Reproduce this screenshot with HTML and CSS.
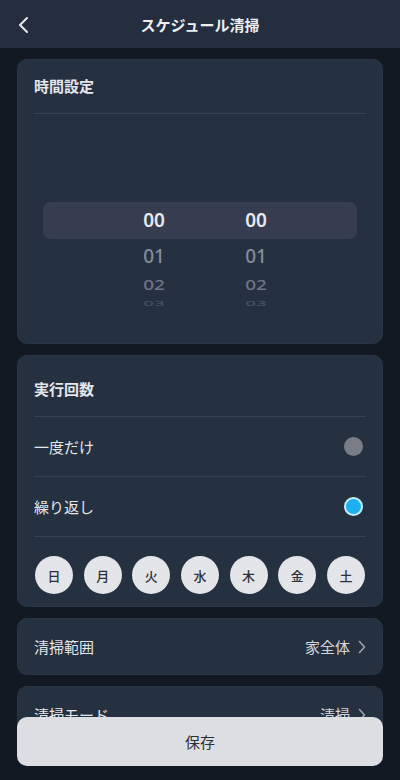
FILE: index.html
```html
<!DOCTYPE html>
<html lang="ja">
<head>
  <meta charset="UTF-8">
  <title>スケジュール清掃</title>
  <meta name="viewport" content="width=device-width, initial-scale=1">
  <link rel="stylesheet" href="styles.css">
</head>
<body>
  <div class="header">
    <svg class="back" width="12" height="18" viewBox="0 0 12 18"><path d="M9 2 L2 9 L9 16" fill="none" stroke="#e8eaee" stroke-width="2" stroke-linecap="round" stroke-linejoin="round"/></svg>
    <h1>スケジュール清掃</h1>
  </div>

  <div class="page">
    <div class="card">
      <div class="card-title time-title">時間設定</div>
      <div class="picker">
        <div class="picker-hl"></div>
        <div class="wheel">
          <div class="cell sel">00</div>
          <div class="cell n1">01</div>
          <div class="cell n2">02</div>
          <div class="cell n3">03</div>
        </div>
        <div class="wheel">
          <div class="cell sel">00</div>
          <div class="cell n1">01</div>
          <div class="cell n2">02</div>
          <div class="cell n3">03</div>
        </div>
      </div>
    </div>

    <div class="card">
      <div class="card-title repeat-title">実行回数</div>
      <div class="row">
        <span>一度だけ</span>
        <span class="radio"></span>
      </div>
      <div class="row">
        <span>繰り返し</span>
        <span class="radio on"></span>
      </div>
      <div class="days">
        <span class="day">日</span>
        <span class="day">月</span>
        <span class="day">火</span>
        <span class="day">水</span>
        <span class="day">木</span>
        <span class="day">金</span>
        <span class="day">土</span>
      </div>
    </div>

    <div class="card link">
      <span>清掃範囲</span>
      <span class="value">家全体 <svg width="8" height="14" viewBox="0 0 8 14"><path d="M1.5 1.5 L6.5 7 L1.5 12.5" fill="none" stroke="#9ca1ab" stroke-width="1.6" stroke-linecap="round" stroke-linejoin="round"/></svg></span>
    </div>

    <div class="card link">
      <span>清掃モード</span>
      <span class="value">清掃 <svg width="8" height="14" viewBox="0 0 8 14"><path d="M1.5 1.5 L6.5 7 L1.5 12.5" fill="none" stroke="#9ca1ab" stroke-width="1.6" stroke-linecap="round" stroke-linejoin="round"/></svg></span>
    </div>
  </div>

  <button class="save">保存</button>
</body>
</html>
```

FILE: styles.css
```css
body { margin: 0; background: #131923; color: #e4e6ea; font-family: "Noto Sans CJK JP", "Noto Sans", sans-serif; height: 780px; overflow: hidden; }
.header { height: 48px; background: #252e3e; display: flex; align-items: center; justify-content: center; position: relative; }
.header .back { position: absolute; left: 18px; top: 16px; }
.header h1 { margin: 0; font-size: 15px; font-weight: 700; color: #eceef1; }

.page { padding: 11px 17px 0; display: flex; flex-direction: column; gap: 11px; }
.card { background: #253041; border: 1px solid #2b3545; border-radius: 10px; padding: 0 16px; }

.card-title { font-size: 15px; font-weight: 700; border-bottom: 1px solid #374151; }
.time-title { height: 53px; line-height: 52px; }
.repeat-title { height: 60px; line-height: 66px; }

.picker { position: relative; height: 229px; display: flex; padding-left: 69px; }
.picker-hl { position: absolute; left: 9px; right: 9px; top: 88px; height: 37px; background: #373d50; border-radius: 7px; }
.wheel { position: relative; width: 102px; padding-top: 88px; display: flex; flex-direction: column; align-items: center; font-family: "Noto Sans", sans-serif; }
.cell { font-size: 19px; line-height: 37px; height: 37px; font-weight: 500; }
.cell.sel { color: #e6e8ec; font-weight: 600; }
.cell.n1 { color: #868c98; height: 35px; line-height: 35px; }
.cell.n2 { color: #6e7584; height: 22px; line-height: 22px; transform: scaleY(0.75); }
.cell.n3 { color: #485163; height: 14px; line-height: 14px; transform: scaleY(0.4); }

.row { height: 59px; display: flex; align-items: center; justify-content: space-between; font-size: 15px; border-bottom: 1px solid #374151; }
.radio { width: 19px; height: 19px; border-radius: 50%; background: #7a7d86; margin-right: 3px; }
.radio.on { width: 15px; height: 15px; background: #1cb1ee; border: 2.5px solid #c4eefd; }

.days { display: flex; justify-content: space-between; padding: 19px 1px 12px; }
.day { width: 38px; height: 38px; border-radius: 50%; background: #e3e5e8; color: #2c3038; font-size: 13px; font-weight: 500; display: flex; align-items: center; justify-content: center; }

.link { height: 55px; display: flex; align-items: center; justify-content: space-between; font-size: 15px; }
.link .value { color: #d3d6db; display: flex; align-items: center; gap: 8px; }

.save { position: fixed; left: 17px; right: 17px; bottom: 14px; height: 49px; border: none; border-radius: 10px; background: #dcdee1; color: #2b2f36; font-size: 15px; font-family: "Noto Sans CJK JP", sans-serif; }
```
